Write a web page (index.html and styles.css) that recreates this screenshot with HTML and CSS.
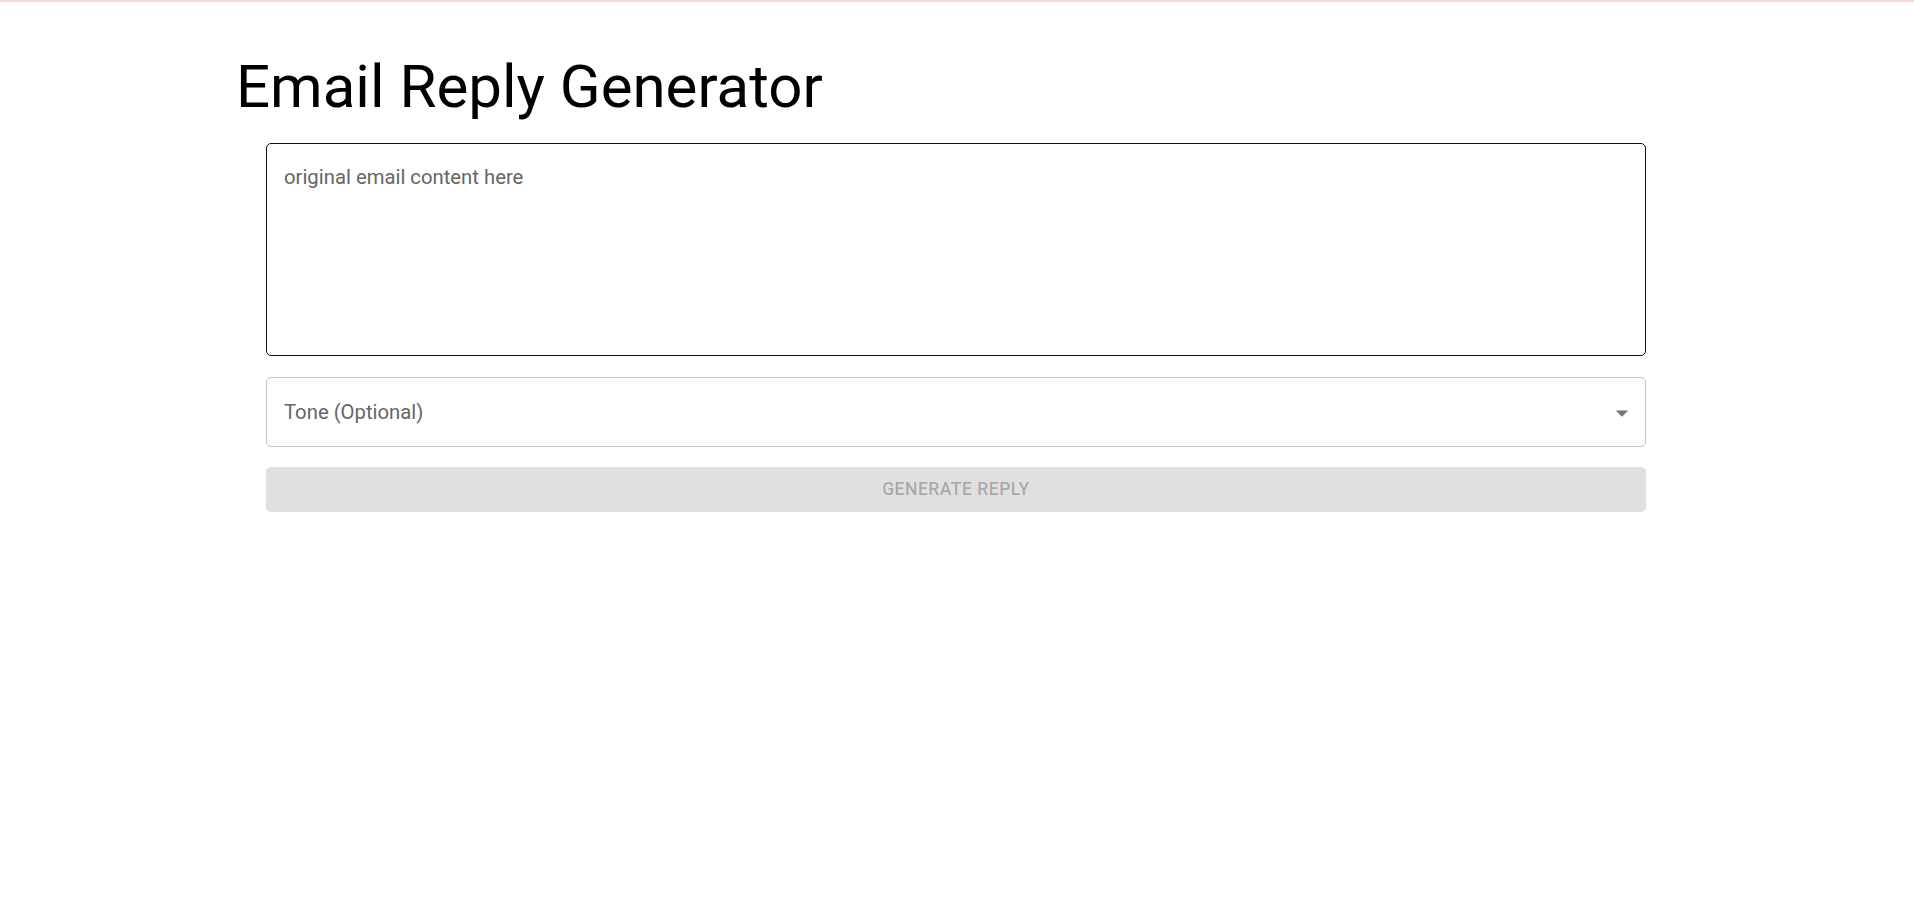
FILE: index.html
```html
<!DOCTYPE html>
<html lang="en">
<head>
<meta charset="utf-8">
<title>Email Reply Generator</title>
<link rel="stylesheet" href="styles.css">
</head>
<body>
<div class="topline"></div>
<main class="page">
  <h1 class="title">Email Reply Generator</h1>
  <form class="form">
    <div class="field field-multiline">
      <span class="placeholder">original email content here</span>
    </div>
    <div class="field field-select">
      <span class="select-label">Tone (Optional)</span>
      <svg class="select-icon" viewBox="0 0 24 24" width="30" height="30" aria-hidden="true"><path d="M7 10l5 5 5-5z"/></svg>
    </div>
    <button type="button" class="btn" disabled>Generate Reply</button>
  </form>
</main>
</body>
</html>
```
FILE: styles.css
```css
* { box-sizing: border-box; }
html, body { margin: 0; padding: 0; background: #fff; }
body {
  font-family: Roboto, "Liberation Sans", Arial, sans-serif;
  color: rgba(0,0,0,0.87);
}
.topline {
  height: 2px;
  background: #f6dcd6;
}
.page {
  padding-left: 236px;
  padding-top: 50px;
}
.title {
  margin: 0 0 21px 0;
  font-size: 60px;
  font-weight: 400;
  line-height: 70px;
  color: #000;
  letter-spacing: 0;
}
.form {
  width: 1380px;
  margin-left: 30px;
  display: flex;
  flex-direction: column;
}
.field {
  border: 1px solid rgba(0,0,0,0.23);
  border-radius: 5px;
  font-size: 20.3px;
}
.field-multiline {
  height: 213px;
  border-color: #111;
  padding: 19px 17px 18px 17px;
  line-height: 28.75px;
  margin-bottom: 21px;
}
.placeholder {
  color: #666;
}
.field-select {
  height: 70px;
  padding: 0 8px 0 17px;
  display: flex;
  align-items: center;
  justify-content: space-between;
  margin-bottom: 20px;
}
.select-label {
  color: #666;
}
.select-icon {
  fill: rgba(0,0,0,0.54);
  display: block;
  margin-top: 1px;
}
.btn {
  height: 45px;
  border: 0;
  border-radius: 5px;
  background: rgba(0,0,0,0.12);
  color: rgba(0,0,0,0.26);
  font-family: Roboto, "Liberation Sans", Arial, sans-serif;
  font-size: 17.5px;
  font-weight: 500;
  text-transform: uppercase;
  letter-spacing: 0.5px;
  padding: 0 0 2px 0;
}
```
